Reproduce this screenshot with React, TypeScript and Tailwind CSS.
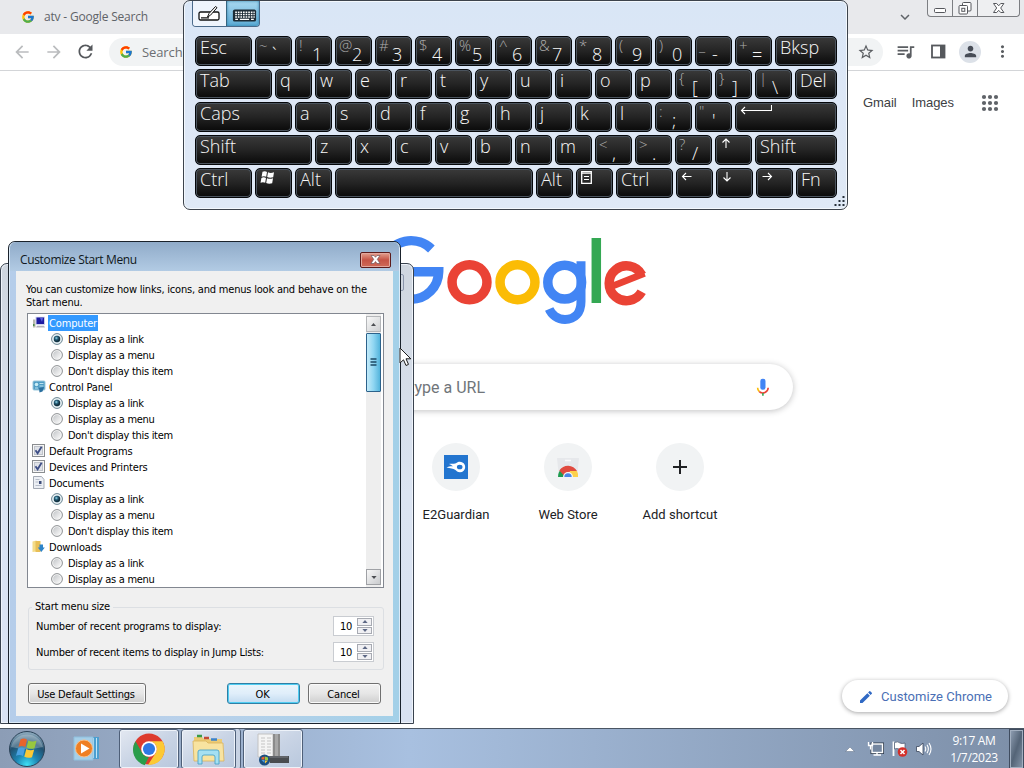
import React from "react";
import {
  MdArrowBack,
  MdArrowForward,
  MdRefresh,
  MdStarBorder,
  MdQueueMusic,
  MdPerson,
  MdMoreVert,
  MdEdit,
  MdAdd,
  MdExpandMore,
} from "react-icons/md";
import { FcGoogle } from "react-icons/fc";

const segoe = "font-['Open_Sans','Noto_Sans',sans-serif]";
const tahoma = "font-['DejaVu_Sans_Condensed','DejaVu_Sans',sans-serif]";

/* ---------- Browser ---------- */

function TabStrip() {
  return (
    <div className="flex h-[34px] shrink-0 items-start bg-[#e8e9ec]">
      <div className="flex h-[34px] items-center pl-[21px]">
        <FcGoogle className="h-[14px] w-[14px]" />
        <span className={`${segoe} ml-[9px] whitespace-nowrap text-[12px] leading-[16px] tracking-[-0.19px] text-[#5f6368]`}>
          atv - Google Search
        </span>
      </div>
      <MdExpandMore className="ml-auto mt-[8px] h-[18px] w-[18px] text-[#5f6368]" />
      <div className="ml-[13px] mr-[4px] flex h-[17px] w-[93px] rounded-b-[4px] border border-t-0 border-[#7c7e82] bg-[#eeeff1]">
        <div className="flex w-[25px] items-center justify-center border-r border-[#7c7e82]">
          <svg width="13" height="17" viewBox="0 0 13 17">
            <rect x=".5" y="8.500" width="11" height="4" rx="1" fill="#fff" stroke="#55575c" />
          </svg>
        </div>
        <div className="flex w-[25px] items-center justify-center border-r border-[#7c7e82]">
          <svg width="15" height="17" viewBox="0 0 15 17" fill="#fff" stroke="#55575c">
            <rect x="4.500" y="2.500" width="8.500" height="8.500" rx="1" />
            <rect x="1" y="5.500" width="8.500" height="8.500" rx="1" />
            <rect x="3.800" y="8.300" width="3" height="3" />
          </svg>
        </div>
        <div className="flex flex-1 items-center justify-center">
          <svg width="14" height="13" viewBox="0 0 14 13">
            <path d="M1.500 1.500h3.200l2 2.300 2-2.300h3.200L8.700 6l3.200 4.500H8.700L6.700 8.300 4.700 10.500H1.500L4.700 6Z" fill="#fff" stroke="#55575c" />
          </svg>
        </div>
      </div>
    </div>
  );
}

function Toolbar() {
  return (
    <div className="flex h-[37px] shrink-0 items-center border-b border-[#d3d5d8] bg-white pb-[1px]">
      <MdArrowBack className="ml-[12px] h-[20px] w-[20px] text-[#babcbe]" />
      <MdArrowForward className="ml-[12px] h-[20px] w-[20px] text-[#babcbe]" />
      <MdRefresh className="ml-[11px] h-[21px] w-[21px] text-[#55585c]" />
      <div className="ml-[13px] flex h-[28px] w-[774px] items-center rounded-full bg-[#f1f3f4] pl-[10px] pr-[8px]">
        <FcGoogle className="h-[14px] w-[14px]" />
        <span className={`${segoe} ml-[9px] text-[13px] leading-[18px] tracking-[-0.1px] text-[#6b6e72]`}>Search</span>
        <MdStarBorder className="ml-auto h-[18px] w-[18px] text-[#5a5d61]" />
      </div>
      <MdQueueMusic className="ml-[12px] h-[21px] w-[21px] text-[#5a5d61]" />
      <svg className="ml-[15px]" width="15" height="15" viewBox="0 0 15 15">
        <rect x="1" y="1.500" width="12.500" height="12" fill="none" stroke="#55585c" strokeWidth="1.800" />
        <rect x="9" y="1" width="5" height="13" fill="#55585c" />
      </svg>
      <div className="ml-[13px] flex h-[22px] w-[22px] items-center justify-center rounded-full bg-[#dce1e8]">
        <MdPerson className="h-[17px] w-[17px] text-[#474d57]" />
      </div>
      <MdMoreVert className="ml-[12px] h-[19px] w-[19px] text-[#5a5d61]" />
    </div>
  );
}

function GoogleLogo() {
  return (
    <svg width="272" height="92" viewBox="0 0 272 92" fill="none" strokeWidth="9.500" className="block overflow-visible">
      <path d="M55.400 14A29.300 29.300 0 1 0 35 64.300A27.700 28 0 0 0 62.700 36.700H35.300" stroke="#4285f4" />
      <circle cx="93.500" cy="47.200" r="17.450" stroke="#ea4335" />
      <circle cx="141.500" cy="47.200" r="17.450" stroke="#fbbc05" />
      <circle cx="188.700" cy="47.200" r="16.900" stroke="#4285f4" />
      <path d="M205 26.300V66.500C205 78 198.500 84.500 189 84.500C181.500 84.500 175.500 79.500 173.200 74" stroke="#4285f4" strokeWidth="9" />
      <path d="M220.300 3V68" stroke="#34a853" />
      <path d="M237 50.900L268.500 38.300" stroke="#ea4335" strokeWidth="6.800" />
      <path d="M265.800 39.900A17.400 17.400 0 1 0 265.700 56.800" stroke="#ea4335" strokeWidth="9.400" />
    </svg>
  );
}

function Mic() {
  return (
    <svg width="20" height="22" viewBox="0 0 20 22" fill="none">
      <rect x="7.300" y="1.700" width="5.200" height="11" rx="2.300" fill="#4285f4" />
      <path d="M4.600 10.700A5.300 5.300 0 0 0 6.400 14.700" stroke="#fbbc05" strokeWidth="1.600" />
      <path d="M6.300 14.600A5.400 5.400 0 0 0 15.200 10.700" stroke="#ea4335" strokeWidth="1.600" />
      <path d="M9.900 16V18.700" stroke="#34a853" strokeWidth="1.600" />
    </svg>
  );
}

function Shortcut({ label, children }: { label: string; children?: React.ReactNode }) {
  return (
    <div className="flex w-[112px] flex-col items-center">
      <div className="flex h-[48px] w-[48px] items-center justify-center rounded-full bg-[#f1f3f4]">{children}</div>
      <span className="mt-[15px] whitespace-nowrap font-['Roboto',sans-serif] text-[13px] leading-[18px] text-[#202124]">
        {label}
      </span>
    </div>
  );
}

function AppsGrid() {
  return (
    <svg width="24" height="24" viewBox="0 0 24 24" fill="#5f6368" className="ml-[23px]">
      {[6, 12, 18].map((y) => [6, 12, 18].map((x) => <circle key={`${x}-${y}`} cx={x} cy={y} r="2.100" />))}
    </svg>
  );
}

function NewTabPage() {
  return (
    <div className="flex flex-1 flex-col bg-white">
      <div className="flex h-[64px] shrink-0 items-center justify-end pr-[22px] font-['Liberation_Sans',Arial,sans-serif] text-[13px] tracking-[-0.05px] text-[#3c4043]">
        <span>Gmail</span>
        <span className="ml-[15px] mr-[1px]">Images</span>
        <AppsGrid />
      </div>
      <div className="mt-[100px] flex h-[92px] justify-center">
        <GoogleLogo />
      </div>
      <div className="mx-auto mt-[37px] flex h-[46px] w-[562px] shrink-0 items-center rounded-full bg-white pr-[20px] pt-[1px] shadow-[0_1px_6px_rgba(32,33,36,0.28)]">
        <span className="w-[254px] whitespace-nowrap text-right font-['Roboto',sans-serif] text-[16px] text-[#70757a]">
          Search Google or type a URL
        </span>
        <span className="ml-auto">
          <Mic />
        </span>
      </div>
      <div className="mt-[33px] flex pl-[400px]">
        <Shortcut label="E2Guardian">
          <svg width="24" height="24" viewBox="0 0 24 24">
            <rect width="24" height="24" fill="#2375cf" />
            <path
              d="M2.500 12.500C4.500 11.200 7 11 9 11.200C7.500 10.200 6 9.300 4.800 9C8 8.200 10.500 9.200 12 8.300C13 7.500 14 6.800 16 6.800A5.200 5.200 0 0 1 16 17.200C13.500 17.200 12.500 15.800 11 14.700C9.500 13.500 6 13.500 2.500 12.500Z"
              fill="#fff"
            />
            <ellipse cx="15.700" cy="12" rx="2.800" ry="2.300" fill="#2375cf" />
          </svg>
        </Shortcut>
        <Shortcut label="Web Store">
          <svg width="24" height="24" viewBox="0 0 24 24">
            <path d="M1 3H23L21 22H3Z" fill="#e6e8eb" />
            <path d="M9 5.500h6" stroke="#fafafa" strokeWidth="1.500" />
            <path d="M2 22A10 10 0 0 1 6.500 13.300L9 22Z" fill="#1e9b50" />
            <path d="M3.300 15.500A10.300 10.300 0 0 1 21 16L12 17L7.500 20Z" fill="#e04a3f" />
            <path d="M14 16H21A10 10 0 0 1 22 22H14Z" fill="#fdd14b" />
            <path d="M7 22A5 5 0 0 1 17 22Z" fill="#f5f5f5" />
            <path d="M8.300 22A3.700 3.700 0 0 1 15.700 22Z" fill="#4a86e8" />
          </svg>
        </Shortcut>
        <Shortcut label="Add shortcut">
          <MdAdd className="h-[24px] w-[24px] text-[#202124]" />
        </Shortcut>
      </div>
      <div className="mb-[16px] ml-auto mr-[16px] mt-auto flex h-[32px] w-[166px] items-center rounded-full bg-white pl-[16px] pt-[1px] shadow-[0_1px_4px_rgba(32,33,36,0.4)]">
        <MdEdit className="h-[16px] w-[16px] text-[#3069c4]" />
        <span className="ml-[7px] whitespace-nowrap font-['Roboto',sans-serif] text-[13px] tracking-[0.03px] text-[#4a6fb5]">
          Customize Chrome
        </span>
      </div>
    </div>
  );
}

/* ---------- On-screen keyboard ---------- */

const arrow = "M1.500 5.500H10.500M5 2L1.500 5.500L5 9";

type KeyDef = { w?: string; t?: string; s?: string; b?: string; icon?: React.ReactNode };

const ArrowIcon = ({ turn }: { turn: string }) => (
  <svg width="12" height="11" viewBox="0 0 12 11" fill="none" stroke="#fff" strokeWidth="1.100" className={turn}>
    <path d={arrow} />
  </svg>
);

const WinIcon = (
  <svg width="15" height="13" viewBox="0 0 15 13" fill="#fff">
    <path d="M2.500 .8Q5 -.3 7 1L6.200 5.800Q4 4.600 1.600 5.800ZM8 1.300Q10.500 2.500 14 1.300L13.200 6.200Q10 7.200 7.200 6ZM1.400 6.900Q3.800 5.800 6 7L5.200 11.800Q3 10.600 .5 11.800ZM7 7.300Q10 8.400 13 7.300L12.200 12.200Q9 13.200 6.200 12Z" />
  </svg>
);

const EnterIcon = (
  <svg width="32" height="10" viewBox="0 0 32 10" fill="none" stroke="#fff" strokeWidth="1.100">
    <path d="M31.500 0V5.500H1.500M5 2L1.500 5.500L5 9" />
  </svg>
);

const MenuIcon = (
  <svg width="11" height="13" viewBox="0 0 11 13" fill="none" stroke="#fff">
    <path d="M.7 .7H10.300V12.300H.7Z" strokeWidth="1.300" />
    <path d="M.7 2.200H10.300M3 5.500H8M3 8.500H8" strokeWidth="1.200" />
  </svg>
);

const rows: KeyDef[][] = [
  [
    { t: "Esc", w: "w-[57px]" }, { s: "~", b: "`" }, { s: "!", b: "1" }, { s: "@", b: "2" }, { s: "#", b: "3" },
    { s: "$", b: "4" }, { s: "%", b: "5" }, { s: "^", b: "6" }, { s: "&", b: "7" }, { s: "*", b: "8" }, { s: "(", b: "9" },
    { s: ")", b: "0" }, { s: "_", b: "-" }, { s: "+", b: "=" }, { t: "Bksp", w: "w-[62px]" },
  ],
  [
    { t: "Tab", w: "w-[77px]" }, ..."qwertyuiop".split("").map((t) => ({ t })), { s: "{", b: "[" }, { s: "}", b: "]" },
    { s: "|", b: "\\" }, { t: "Del", w: "w-[42px]" },
  ],
  [
    { t: "Caps", w: "w-[97px]" }, ..."asdfghjkl".split("").map((t) => ({ t })), { s: ":", b: ";" }, { s: '"', b: "'" },
    { icon: EnterIcon, w: "w-[102px]" },
  ],
  [
    { t: "Shift", w: "w-[117px]" }, ..."zxcvbnm".split("").map((t) => ({ t })), { s: "<", b: "," }, { s: ">", b: "." },
    { s: "?", b: "/" }, { icon: <ArrowIcon turn="rotate-90" /> }, { t: "Shift", w: "w-[82px]" },
  ],
  [
    { t: "Ctrl", w: "w-[57px]" }, { icon: WinIcon }, { t: "Alt" }, { w: "w-[198px]" }, { t: "Alt" }, { icon: MenuIcon },
    { t: "Ctrl", w: "w-[57px]" }, { icon: <ArrowIcon turn="" /> }, { icon: <ArrowIcon turn="-rotate-90" /> },
    { icon: <ArrowIcon turn="rotate-180" /> }, { t: "Fn", w: "w-[41px]" },
  ],
];

function Key({ k }: { k: KeyDef }) {
  return (
    <div
      className={`${k.w ?? "w-[37px]"} flex h-[30px] shrink-0 overflow-hidden rounded-[5px] border border-[#05070a] bg-linear-to-b from-[#3a3a3a] via-[#242424] to-[#0a0a0a] pl-[4px] shadow-[inset_0_0_0_1px_#4b545e]`}
    >
      {k.t && <span className="text-[18px] font-[360] leading-[20px] text-[#f8f8f8]">{k.t}</span>}
      {k.icon && <span className="pt-[2px]">{k.icon}</span>}
      {k.s && <span className="-ml-px w-[13px] shrink-0 whitespace-nowrap text-[15px] font-[350] leading-[16px] text-[#adadad]">{k.s}</span>}
      {k.b && <span className="pt-[6px] text-[18px] font-[360] leading-[22px] text-[#f8f8f8]">{k.b}</span>}
    </div>
  );
}

function Keyboard() {
  return (
    <div
      className={`${segoe} absolute left-[183px] top-0 flex h-[210px] w-[665px] flex-col rounded-[7px] border border-[#3c434c] bg-linear-to-b from-[#d9e6f6] via-[#dde7f6] to-[#dfe9f6] pl-[11px] shadow-[inset_0_0_0_1px_#f3f8fd]`}
    >
      <div className="-ml-[3px] flex h-[26px] w-[68px] overflow-hidden rounded-b-[4px] border border-t-0 border-[#4b6a8a]">
        <div className="flex w-[33px] items-center justify-center bg-[#eef4fc]">
          <svg width="24" height="18" viewBox="0 0 24 18">
            <rect x="1" y="7" width="20" height="8" rx="1.500" fill="#fff" stroke="#111" strokeWidth="1.300" />
            <path d="M3 12.800H11" stroke="#111" strokeWidth="1.200" />
            <path d="M9.500 12L11 8.500L17.500 1.500L19 2.700L12.500 10.200Z" fill="#fff" stroke="#111" />
          </svg>
        </div>
        <div className="flex flex-1 items-center justify-center border-l border-[#36647f] bg-linear-to-b from-[#a8d8f0] to-[#5cacd6] pl-[2px] pt-[4px] shadow-[inset_0_0_3px_#2f7fa8]">
          <svg width="25" height="13" viewBox="0 0 26 14">
            <rect x=".5" y=".5" width="25" height="13" rx="2" fill="#1c2b35" />
            <path d="M3 3.500H24M3 6H24M3 8.500H24" stroke="#fff" strokeWidth="1.600" strokeDasharray="1.800 1" />
            <path d="M3 11.200H6M8 11.200H18M20 11.200H23" stroke="#fff" strokeWidth="1.400" />
          </svg>
        </div>
      </div>
      <div className="mt-[9px] flex flex-col gap-[3px]">
        {rows.map((r, i) => (
          <div key={i} className="flex gap-[3px]">
            {r.map((k, j) => (
              <Key key={j} k={k} />
            ))}
          </div>
        ))}
      </div>
      <svg width="11" height="11" viewBox="0 0 11 11" fill="#26303a" className="ml-auto mr-[2px] mt-[-2px]">
        <path d="M8.500 0h2v2h-2zM4.500 4h2v2h-2zM8.500 4h2v2h-2zM.5 8h2v2h-2zM4.500 8h2v2h-2zM8.500 8h2v2h-2z" />
      </svg>
    </div>
  );
}

/* ---------- Customize Start Menu dialog ---------- */

function Radio({ on }: { on?: boolean }) {
  return (
    <svg width="12" height="12" viewBox="0 0 12 12" className="shrink-0">
      <defs>
        <linearGradient id="rg" x1="0" y1="0" x2="1" y2="1">
          <stop offset="0" stopColor="#c3c6c9" />
          <stop offset="1" stopColor="#fafafa" />
        </linearGradient>
        <radialGradient id="rd" cx=".4" cy=".35">
          <stop offset="0" stopColor="#9fdcec" />
          <stop offset=".5" stopColor="#27617c" />
          <stop offset="1" stopColor="#12303f" />
        </radialGradient>
      </defs>
      <circle cx="6" cy="6" r="5.400" fill="#f7f7f7" stroke={on ? "#62818f" : "#8c8f92"} />
      <circle cx="6" cy="6" r="3.900" fill={on ? "#cfe4ec" : "url(#rg)"} />
      {on && <circle cx="6" cy="6" r="3.200" fill="url(#rd)" />}
    </svg>
  );
}

function Check() {
  return (
    <svg width="13" height="13" viewBox="0 0 13 13" className="-mt-[2px]">
      <rect x=".5" y=".5" width="12" height="12" fill="#f6f6f6" stroke="#8a8d90" />
      <rect x="2.500" y="2.500" width="8" height="8" fill="#dfe2e8" stroke="#bfc3ca" />
      <path d="M3.500 6.300L5.600 9.300L9.600 2.800" fill="none" stroke="#3f4f86" strokeWidth="1.800" />
    </svg>
  );
}

function ItemIcon({ kind }: { kind: string }) {
  if (kind === "computer")
    return (
      <svg width="14" height="13" viewBox="0 0 14 13" className="-mt-[2px]">
        <path d="M1 3.500h2.500v8H1z" fill="#b9b9ad" />
        <path d="M1 8h1.500v2H1z" fill="#4c8d4c" />
        <path d="M3.500 .8h9.500v8H3.500z" fill="#c9cdec" />
        <path d="M4.500 1.500h7.500v6.500H4.500z" fill="#1d1aa0" />
        <path d="M8 2h3l-1 4z" fill="#5560e0" />
        <path d="M5 9.800h7l1 1.700H4z" fill="#b3b3bd" />
      </svg>
    );
  if (kind === "panel")
    return (
      <svg width="14" height="13" viewBox="0 0 14 13" className="-mt-[2px]">
        <rect x="1" y="1" width="12" height="9" rx="1" fill="#4e9cc4" stroke="#9cc9dd" />
        <circle cx="4.500" cy="4.500" r="1.800" fill="#c7ecf5" />
        <path d="M7.500 3.500h4M7.500 6h4M3 8h3" stroke="#b9e2f0" />
        <path d="M7 8l5-1-1.500 4.500-3 1z" fill="#2a6f9f" />
      </svg>
    );
  if (kind === "documents")
    return (
      <svg width="14" height="13" viewBox="0 0 14 13" className="-mt-[2px]">
        <path d="M1.500 .5h8l2.500 3v9H1.500z" fill="#eceff4" stroke="#a3a9b3" />
        <path d="M3.500 3.500h4M3.500 6h3M3.500 9.500h6" stroke="#b6bdc9" />
        <path d="M7 5h2.500v3H7z" fill="#3d4c78" />
      </svg>
    );
  return (
    <svg width="14" height="13" viewBox="0 0 14 13" className="-mt-[2px]">
      <path d="M.5 1.500l4-1v11l-4 .5z" fill="#f4dc88" />
      <path d="M3.500 1h5v11h-5z" fill="#e8bf57" />
      <path d="M7.500 4.500h3.500v3h1.800L9.300 12 5.800 7.500h1.700z" fill="#2d83c8" />
    </svg>
  );
}

type Item = { icon?: string; check?: boolean; label: string; selected?: boolean; options?: string[]; on?: number };
const LINK = "Display as a link";
const MENU = "Display as a menu";
const NONE = "Don't display this item";
const items: Item[] = [
  { icon: "computer", label: "Computer", selected: true, options: [LINK, MENU, NONE], on: 0 },
  { icon: "panel", label: "Control Panel", options: [LINK, MENU, NONE], on: 0 },
  { check: true, label: "Default Programs" },
  { check: true, label: "Devices and Printers" },
  { icon: "documents", label: "Documents", options: [LINK, MENU, NONE], on: 0 },
  { icon: "downloads", label: "Downloads", options: [LINK, MENU] },
];

function ItemList() {
  return (
    <div className="flex h-[275px] w-[357px] border border-[#828790] bg-white">
      <div className="flex-1 pl-[4px] pt-[1px]">
        {items.map((it) => (
          <div key={it.label}>
            <div className="flex h-[16px] items-center">
              <span className="flex w-[15px]">{it.check ? <Check /> : <ItemIcon kind={it.icon ?? ""} />}</span>
              <span
                className={
                  it.selected
                    ? "ml-[1px] h-[16px] bg-[#3399ff] px-[1px] leading-[17px] tracking-[-0.15px] text-white"
                    : "ml-[2px] h-[16px] leading-[18px] tracking-[-0.17px]"
                }
              >
                {it.label}
              </span>
            </div>
            {it.options?.map((o, i) => (
              <div key={o} className="flex h-[16px] items-center pl-[19px]">
                <Radio on={it.on === i} />
                <span className="ml-[5px] h-[16px] leading-[18px] tracking-[-0.29px]">{o}</span>
              </div>
            ))}
          </div>
        ))}
      </div>
      <div className="mr-[2px] flex w-[15px] flex-col justify-between bg-[#eeeeee] py-[2px]">
        <div className="flex flex-col gap-[1px]">
          <div className="flex h-[16px] items-center justify-center border border-[#b4b6b9] bg-linear-to-br from-[#f8f8f8] to-[#cfd1d3]">
            <svg width="5" height="3" viewBox="0 0 7 4">
              <path d="M0 4L3.500 0L7 4Z" fill="#4c4e52" />
            </svg>
          </div>
          <div className="flex h-[59px] items-center justify-center rounded-[1px] border border-[#2c628b] bg-linear-to-r from-[#c3ebfa] via-[#90d6f2] to-[#52b4dc] pb-[1px] pr-[1px]">
            <svg width="7" height="8" viewBox="0 0 7 8">
              <path d="M.5 1H6.500M.5 4H6.500M.5 7H6.500" stroke="#1c4a66" strokeWidth="1.300" />
            </svg>
          </div>
        </div>
        <div className="flex h-[16px] items-center justify-center border border-[#9fa1a5] bg-linear-to-br from-[#f8f8f8] to-[#c9cbce]">
          <svg width="6" height="3" viewBox="0 0 7 4">
            <path d="M0 0L3.500 4L7 0Z" fill="#4c4e52" />
          </svg>
        </div>
      </div>
    </div>
  );
}

function Spinner() {
  return (
    <div className="flex h-[20px] w-[41px] border border-[#c9ccd1] bg-white">
      <span className="w-[22px] pl-[6px] leading-[20px] tracking-[-0.2px]">10</span>
      <div className="flex flex-1 flex-col gap-[1px] p-[1px]">
        {["M0 4L3.500 0L7 4Z", "M0 0L3.500 4L7 0Z"].map((d) => (
          <div key={d} className="flex flex-1 items-center justify-center border border-[#a7aab2] bg-[#f0f0f3]">
            <svg width="6" height="3" viewBox="0 0 7 4">
              <path d={d} fill="#5d6885" />
            </svg>
          </div>
        ))}
      </div>
    </div>
  );
}

function Dialog() {
  return (
    <div
      className={`${tahoma} absolute left-[8px] top-[241px] flex h-[483px] w-[393px] flex-col rounded-t-[7px] border border-[#1a222c] bg-linear-to-r from-[#b5cdea] via-[#b9d1ea] to-[#a3d0e8] px-[7px] pb-[7px] text-[11px] tracking-[-0.2px] text-black shadow-[inset_0_0_0_1px_#dcebf8]`}
    >
      <div className="-mx-[6px] flex h-[29px] shrink-0 items-center rounded-t-[6px] bg-linear-to-b from-[#90abc9] to-[#b2cbe4] pl-[10px] pr-[8px] pt-[6px]">
        <span className={`${segoe} whitespace-nowrap text-[12px] tracking-[-0.35px] text-[#101820]`}>Customize Start Menu</span>
        <button className="ml-auto flex h-[16px] w-[31px] items-center justify-center rounded-[2px] border border-[#5c1b1b] bg-linear-to-b from-[#e3a090] via-[#c55345] to-[#cf6a58] shadow-[inset_0_0_0_1px_#e2a79d]">
          <svg width="11" height="9" viewBox="0 0 11 9">
            <path d="M1 .5H4L5.500 2.300L7 .5H10L7.300 4.300L10 8.500H7L5.500 6.500L4 8.500H1L3.700 4.300Z" fill="#fff" stroke="#5e4a52" strokeWidth=".6" />
          </svg>
        </button>
      </div>
      <div className="flex flex-1 flex-col bg-[#f0f0f0] px-[11px] pt-[12px]">
        <p className="-ml-px whitespace-nowrap leading-[13px]">
          You can customize how links, icons, and menus look and behave on the
          <br />
          Start menu.
        </p>
        <div className="mt-[4px]">
          <ItemList />
        </div>
        <fieldset className="ml-[1px] mt-[12px] flex h-[70px] w-[356px] flex-col rounded-[3px] border border-[#dcdfe3] pl-[7px] pr-[9px]">
          <legend className="-ml-[4px] px-[3px] leading-[14px]">Start menu size</legend>
          <div className="mt-[2px] flex items-center justify-between">
            <span className="pt-[2px] tracking-[-0.17px]">Number of recent programs to display:</span>
            <Spinner />
          </div>
          <div className="mt-[6px] flex items-center justify-between">
            <span className="pt-[2px] tracking-[-0.22px]">Number of recent items to display in Jump Lists:</span>
            <Spinner />
          </div>
        </fieldset>
        <div className="mt-[13px] flex pl-[1px]">
          <button className="h-[21px] w-[118px] rounded-[3px] border border-[#707070] bg-linear-to-b from-[#f2f2f2] via-[#e6e6e6] to-[#cfcfcf] pr-[2px] pt-px leading-[19px] shadow-[inset_0_0_0_1px_#fafafa]">
            Use Default Settings
          </button>
          <button className="ml-[81px] h-[21px] w-[73px] rounded-[3px] border border-[#2f7fa5] bg-linear-to-b from-[#eaf5fb] via-[#e0eefa] to-[#c2dbf0] pr-[2px] pt-px leading-[19px] shadow-[inset_0_0_0_1px_#4fcdf2]">
            OK
          </button>
          <button className="ml-[8px] h-[21px] w-[73px] rounded-[3px] border border-[#707070] bg-linear-to-b from-[#f2f2f2] via-[#e6e6e6] to-[#cfcfcf] pr-[2px] pt-px leading-[19px] shadow-[inset_0_0_0_1px_#fafafa]">
            Cancel
          </button>
        </div>
      </div>
    </div>
  );
}

function BackWindow() {
  return (
    <div className="absolute left-0 top-[263px] flex h-[461px] w-[414px] justify-end rounded-t-[7px] border border-[#39424e] bg-linear-to-b from-[#cfd6df] via-[#dbe4f2] to-[#d9e2f2] shadow-[inset_0_0_0_1px_#eef3fa]">
      <div className="mr-[9px] mt-[10px] h-[17px] w-[20px] rounded-[2px] border border-[#8b96ac]" />
    </div>
  );
}

/* ---------- Taskbar ---------- */

function StartOrb() {
  return (
    <svg width="38" height="38" viewBox="0 0 38 38">
      <defs>
        <radialGradient id="orb" cx=".5" cy=".95" r=".9">
          <stop offset="0" stopColor="#3fe0f5" />
          <stop offset=".35" stopColor="#1d86b4" />
          <stop offset=".7" stopColor="#22506f" />
          <stop offset="1" stopColor="#86a4b8" />
        </radialGradient>
      </defs>
      <circle cx="19" cy="19" r="17.500" fill="url(#orb)" stroke="#2c4358" />
      <path d="M3 17A16.500 16.500 0 0 1 35 17Q19 21 3 17Z" fill="#fff" opacity=".25" />
      <path d="M12.500 9.500Q16 7.500 19 9.800L17.300 17Q14 15 10.500 16.800Z" fill="#e8632c" />
      <path d="M20.300 10.500Q24 12.500 28.500 10.800L26.500 18.200Q22.500 19.500 18.600 17.500Z" fill="#98c73f" />
      <path d="M10.200 18.200Q13.500 16.500 17 18.500L15 26Q11.500 24 8 25.800Z" fill="#4aa0e0" />
      <path d="M18.300 19Q22 21 26.200 19.600L24 27.200Q20 28.500 16.300 26.700Z" fill="#fbc935" />
    </svg>
  );
}

function Taskbar() {
  const btn =
    "flex h-[40px] items-center justify-center rounded-[3px] border border-[#4e5f78] bg-linear-to-br from-[#e3e8f1] via-[#c9d4e5] to-[#b9c8dd] shadow-[inset_0_0_0_1px_#edf2f9]";
  return (
    <div
      className={`${segoe} flex h-[40px] shrink-0 items-center overflow-hidden border-t border-[#4a5563] bg-linear-to-r from-[#8c9db6] via-[#a8c0e0] via-40% to-[#7d8fa8]`}
    >
      <span className="ml-[8px]">
        <StartOrb />
      </span>
      <svg width="28" height="27" viewBox="0 0 28 27" className="ml-[27px]">
        <path d="M19 2h7v22h-7z" fill="#4c9fd0" />
        <path d="M20.500 3v20M23.500 3v20" stroke="#c2e6f7" />
        <path d="M1 2h19v23H1z" fill="#a5cfe8" stroke="#8fc0de" />
        <circle cx="11" cy="13.500" r="8.500" fill="#ef7f23" stroke="#f8c08a" />
        <path d="M8 8.500L16.500 13.500L8 18.500Z" fill="#fff" />
      </svg>
      <div className={`${btn} ml-[18px] w-[60px]`}>
        <svg width="34" height="34" viewBox="0 0 48 48">
          <circle cx="24" cy="24" r="22" fill="#dd3b2e" />
          <path d="M4.950 13L14.500 29.500A11 11 0 0 0 24 35L18 46.800A22.500 22.500 0 0 1 4.950 13Z" fill="#2a9d4b" />
          <path d="M24 13H43.200A22.500 22.500 0 0 1 22.500 46.500L33.500 29.500A11 11 0 0 0 24 13Z" fill="#fcc934" />
          <circle cx="24" cy="24" r="11" fill="#fff" />
          <circle cx="24" cy="24" r="8.600" fill="#2f78e4" />
        </svg>
      </div>
      <div className={`${btn} ml-[2px] w-[55px]`}>
        <svg width="34" height="32" viewBox="0 0 34 32">
          <path d="M2 4h8l2 2h18v22H2z" fill="#eccb75" />
          <path d="M5 3h5" stroke="#3a9b46" strokeWidth="2.500" />
          <path d="M12 5h5" stroke="#c34a34" strokeWidth="2.500" />
          <path d="M19 6.500h6" stroke="#3d82c9" strokeWidth="2.500" />
          <path d="M1 8h13l2 2h15l1 18H2z" fill="#f8e3a0" stroke="#d9b35a" strokeWidth=".8" />
          <path d="M6 31V19q0-2 2-2h17q2 0 2 2v12h-4v-7q0-2-2-2h-9q-2 0-2 2v7z" fill="#a5e0f2" stroke="#4aa3c8" strokeWidth=".9" />
        </svg>
      </div>
      <div className="h-[40px] w-[5px] rounded-r-[3px] border-r border-[#4e5f78] bg-[#c7d2e3]" />
      <div className={`${btn} ml-[2px] w-[60px]`}>
        <svg width="34" height="34" viewBox="0 0 34 34">
          <path d="M2 2h15v23H2z" fill="#f4f4f4" stroke="#c2c2c2" />
          <path d="M5 6h4M11 6h4M5 9h4M11 9h4M5 12h4M11 12h4M5 15h4M11 15h4M5 18h4M11 18h4M5 21h4M11 21h4" stroke="#c4c4c4" />
          <path d="M17 2h7v23h-7z" fill="#8b8b8b" />
          <path d="M19 2h3v23h-3z" fill="#a7a7a7" />
          <path d="M12 24h21v7H14z" fill="#494c50" />
          <path d="M13 25h19" stroke="#7c7f84" />
          <circle cx="8.500" cy="28" r="5.500" fill="#1c4f80" />
          <path d="M5.500 25.500l3-1v3h-3z" fill="#e8632c" />
          <path d="M9 24.500l3 1v2.500H9z" fill="#98c73f" />
          <path d="M5.500 28h3v3z" fill="#4aa0e0" />
          <path d="M9 28.500h3l-3 3z" fill="#fbc935" />
        </svg>
      </div>
      <svg width="10" height="6" viewBox="0 0 10 6" className="ml-auto">
        <path d="M.5 5.500L5 1L9.500 5.500Z" fill="#fff" stroke="#5e6e85" strokeWidth=".5" />
      </svg>
      <svg width="17" height="16" viewBox="0 0 17 16" className="ml-[12px]" fill="none">
        <rect x="5" y="3" width="10.500" height="8.500" stroke="#2f3b4c" strokeWidth="3" />
        <rect x="5" y="3" width="10.500" height="8.500" fill="#7587a0" stroke="#fff" strokeWidth="1.400" />
        <path d="M6.500 14H14M10 11.500V14" stroke="#fff" strokeWidth="1.400" />
        <path d="M1.500 1V4.500H5.500V1M3.500 4.500V8.500" stroke="#fff" strokeWidth="1.300" />
      </svg>
      <svg width="18" height="18" viewBox="0 0 18 18" className="ml-[7px]">
        <path d="M2.500 1.500V16" stroke="#fff" strokeWidth="1.800" />
        <path d="M3.500 2.500Q7 1 9 3Q11 4 14 3V9.500Q10 11 8 9Q6 8 3.500 9Z" fill="#fff" stroke="#44516a" strokeWidth=".7" />
        <circle cx="11.500" cy="12" r="4.800" fill="#d32f2a" />
        <path d="M9.500 10L13.500 14M13.500 10L9.500 14" stroke="#fff" strokeWidth="1.500" />
      </svg>
      <svg width="18" height="16" viewBox="0 0 18 16" className="ml-[6px]" fill="none">
        <path d="M1.500 5.500H4L8 2V14L4 10.500H1.500Z" fill="#fff" stroke="#37445a" strokeWidth=".8" />
        <path d="M10 5.500Q11.500 8 10 10.500M12 3.800Q14.700 8 12 12.200M14 2Q18 8 14 14" stroke="#fff" strokeWidth="1.100" />
      </svg>
      <div className="ml-[15px] w-[52px] whitespace-nowrap text-center text-[12px] leading-[17px] tracking-[-0.3px] text-white">
        9:17 AM
        <br />
        1/7/2023
      </div>
      <div className="ml-[9px] h-[40px] w-[15px] border border-[#3f4c5f] bg-linear-to-br from-[#93a2b6] via-[#546477] to-[#8797ab] shadow-[inset_0_0_0_1px_#a2afc0]" />
    </div>
  );
}

function Cursor() {
  return (
    <svg width="13" height="20" viewBox="0 0 13 20" className="absolute left-[399px] top-[347px]">
      <path d="M1 1V16L4.500 12.800L7 18.500L9.500 17.400L7 11.800H11.800Z" fill="#fff" stroke="#1b1b1b" />
    </svg>
  );
}

export default function App() {
  return (
    <div className="relative flex h-[768px] w-[1024px] flex-col overflow-hidden bg-white">
      <TabStrip />
      <Toolbar />
      <NewTabPage />
      <Taskbar />
      <Keyboard />
      <BackWindow />
      <Dialog />
      <Cursor />
    </div>
  );
}
